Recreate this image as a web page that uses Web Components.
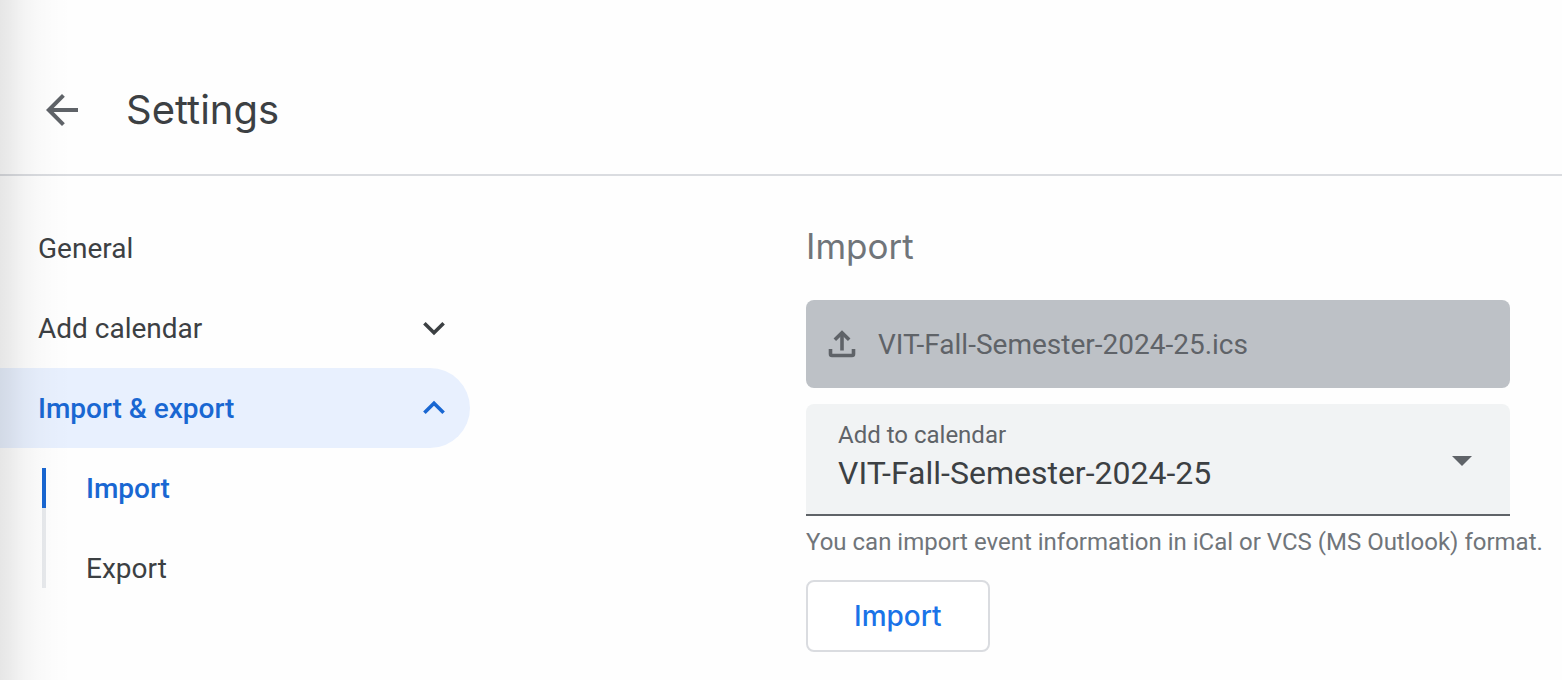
<!DOCTYPE html>
<html lang="en">
<head>
<meta charset="utf-8">
<meta name="viewport" content="width=device-width, initial-scale=1">
<title>Settings</title>
<style>
  html, body { margin: 0; min-height: 100%; background: #fefefe; }
  body { font-family: Roboto, "Liberation Sans", sans-serif; color: #3c4043; }
</style>
</head>
<body>
<settings-page>
  <settings-header slot="header">Settings</settings-header>
  <settings-nav slot="nav">
    <nav-item>General</nav-item>
    <nav-item chevron="down">Add calendar</nav-item>
    <nav-item chevron="up" active>Import &amp; export</nav-item>
    <nav-sub></nav-sub>
  </settings-nav>
  <import-panel></import-panel>
</settings-page>

<script>
  const define = (name, html) => customElements.define(name, class extends HTMLElement {
    constructor() {
      super();
      this.attachShadow({ mode: "open" }).innerHTML = html;
    }
  });

  define("settings-page", `
    <style>
      :host { display: block; position: relative; overflow-x: hidden; min-height: 100vh; }
      .columns { display: grid; grid-template-columns: 470px minmax(0, 1fr); column-gap: 336px; padding: 32px 52px 28px 0; }
      .edge { position: absolute; inset: 0 auto 0 0; width: 72px; pointer-events: none;
        background: linear-gradient(90deg, rgba(0,0,0,.095) 0, rgba(0,0,0,.075) 10px, rgba(0,0,0,.04) 24px, rgba(0,0,0,.018) 38px, rgba(0,0,0,.006) 54px, rgba(0,0,0,0) 72px); }
      main { min-width: 0; }
    </style>
    <slot name="header"></slot>
    <div class="columns"><slot name="nav"></slot><main><slot></slot></main></div>
    <div class="edge"></div>`);

  define("settings-header", `
    <style>
      :host { display: block; border-bottom: 2px solid #dadce0; }
      header { display: flex; align-items: center; gap: 40px; padding: 80px 38px 34px; }
      button { display: block; width: 48px; height: 48px; padding: 0; border: 0; background: none; color: #5f6368; cursor: pointer; }
      svg { display: block; width: 48px; height: 48px; }
      h1 { margin: 0; font: 400 40px/60px Inter, sans-serif; color: #3c4043; }
    </style>
    <header>
      <button type="button" aria-label="Back">
        <svg viewBox="0 0 24 24" aria-hidden="true"><path fill="currentColor" d="M20 11H7.83l5.59-5.59L12 4l-8 8 8 8 1.41-1.41L7.83 13H20v-2z"/></svg>
      </button>
      <h1><slot></slot></h1>
    </header>`);

  define("settings-nav", `
    <style>:host { display: block; }</style>
    <nav aria-label="Settings"><slot></slot></nav>`);

  customElements.define("nav-item", class extends HTMLElement {
    constructor() {
      super();
      this.attachShadow({ mode: "open" }).innerHTML = `
        <style>
          :host { display: block; }
          a { display: flex; align-items: center; justify-content: space-between; height: 80px; padding: 0 24px 0 38px; box-sizing: border-box;
            border-radius: 0 40px 40px 0; font-size: 28px; line-height: 42px; color: #3c4043; text-decoration: none; }
          span { padding-top: 2px; }
          :host([active]) a { background: #e8f0fe; color: #1967d2; font-weight: 500; }
          svg { width: 24px; height: 24px; display: none; }
          :host([chevron]) svg { display: block; }
          :host([chevron="up"]) svg { transform: rotate(180deg); }
        </style>
        <a href="#"><span><slot></slot></span>
          <svg viewBox="0 0 24 24" aria-hidden="true"><path fill="none" stroke="currentColor" stroke-width="3.6" d="M2.4 7.3 12 16.8l9.6-9.5"/></svg>
        </a>`;
    }
  });

  define("nav-sub", `
    <style>
      :host { display: block; padding: 20px 0 0 42px; }
      ul { list-style: none; margin: 0; padding: 0; }
      li { border-left: 4px solid #e8eaed; height: 40px; padding: 40px 0 0 40px; }
      li.current { border-color: #1967d2; padding-top: 0; }
      a { display: block; font-size: 28px; line-height: 42px; color: #3c4043; text-decoration: none; }
      .current a { color: #1967d2; font-weight: 500; }
    </style>
    <ul>
      <li class="current"><a href="#import" aria-current="true">Import</a></li>
      <li><a href="#export">Export</a></li>
    </ul>`);

  define("import-panel", `
    <style>
      :host { display: block; }
      h2 { margin: 16px 0 32px; font: 400 35px/44px Inter, sans-serif; color: #70757a; }
      .hint { margin: 8px 0 20px; font-size: 24px; line-height: 36px; color: #70757a; white-space: nowrap; }
    </style>
    <section aria-labelledby="title">
      <h2 id="title">Import</h2>
      <file-button>VIT-Fall-Semester-2024-25.ics</file-button>
      <calendar-select></calendar-select>
      <p class="hint">You can import event information in iCal or VCS (MS Outlook) format.</p>
      <outline-button>Import</outline-button>
    </section>`);

  define("file-button", `
    <style>
      :host { display: block; margin-bottom: 16px; }
      button { display: flex; align-items: center; gap: 20px; width: 100%; height: 88px; padding: 0 20px; border: 0; border-radius: 8px;
        background: #bdc1c6; color: #5f6368; font: 400 28px/42px Roboto, sans-serif; text-align: left; }
      span { padding-top: 2px; }
      svg { width: 32px; height: 32px; flex: none; }
    </style>
    <button type="button" disabled>
      <svg viewBox="0 0 32 32" aria-hidden="true" fill="none" stroke="currentColor" stroke-width="3.6">
        <path d="M16 22.500V6"/><path d="m8.800 11.800 7.200-7 7.200 7"/>
        <path d="M4.500 21v5q0 1.500 1.500 1.500h20q1.500 0 1.500-1.500v-5"/>
      </svg>
      <span><slot></slot></span>
    </button>`);

  define("calendar-select", `
    <style>
      :host { display: block; }
      .field { display: grid; grid-template-columns: 1fr auto; align-items: center; background: #f1f3f4;
        border-bottom: 2px solid #5f6368; border-radius: 8px 8px 0 0; }
      .field > * { grid-row: 1; }
      label { grid-column: 1; align-self: start; padding: 15px 0 0 32px; font-size: 24px; line-height: 32px; color: #5f6368; pointer-events: none; z-index: 1; }
      select { grid-column: 1 / -1; appearance: none; width: 100%; height: 110px; margin: 0; padding: 28px 88px 0 32px; border: 0; border-radius: 8px 8px 0 0;
        background: none; color: #3c4043; font: 400 32px/40px Roboto, sans-serif; cursor: pointer; }
      svg { grid-column: 2; width: 20px; height: 10px; margin: 4px 38px 0 0; pointer-events: none; }
    </style>
    <div class="field">
      <label for="calendar">Add to calendar</label>
      <select id="calendar"><option>VIT-Fall-Semester-2024-25</option></select>
      <svg viewBox="0 0 20 10" aria-hidden="true"><path fill="#5f6368" d="M0 0h20L10 10z"/></svg>
    </div>`);

  define("outline-button", `
    <style>
      :host { display: block; }
      button { height: 72px; padding: 0 46px; border: 2px solid #dadce0; border-radius: 8px; background: #fff; color: #1a73e8;
        font: 500 28px/40px Inter, sans-serif; cursor: pointer; }
    </style>
    <button type="button"><slot></slot></button>`);
</script>
</body>
</html>
